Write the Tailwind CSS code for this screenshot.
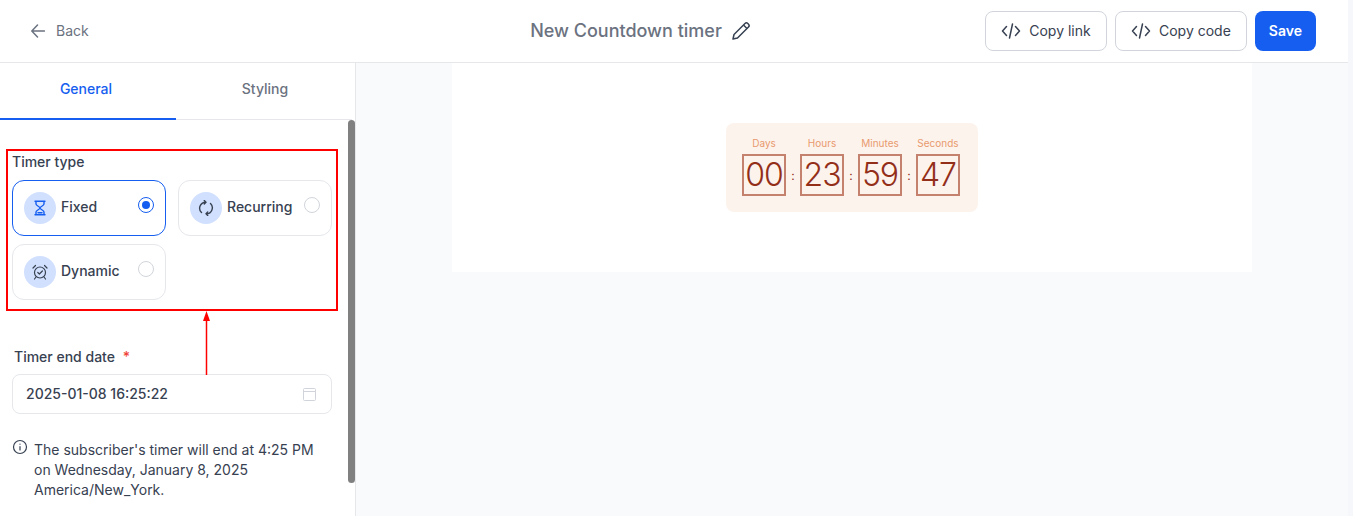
<!DOCTYPE html>
<html lang="en">
<head>
  <meta charset="UTF-8">
  <title>New Countdown timer</title>
  <script src="https://cdn.jsdelivr.net/npm/@tailwindcss/browser@4"></script>
</head>
<body class="h-[516px] w-[1353px] overflow-hidden bg-[#f5f7fa] font-['Inter',sans-serif] text-[#374151]">
  <!-- Top bar -->
  <header class="flex h-[63px] w-[1348px] items-center justify-between border-b border-[#e5e7eb] bg-white pl-[31px] pr-[32px]">
    <a class="flex w-[265px] items-center gap-[11px] text-sm text-[#6b7280]">
      <svg class="h-[14px] w-[14px]" viewBox="0 0 14 14" fill="none" stroke="currentColor" stroke-width="1.500" stroke-linecap="round" stroke-linejoin="round"><path d="M13.500 7H1M6.500 1 .8 7l5.700 6"/></svg>
      Back
    </a>
    <div class="flex items-center gap-[9px] text-lg font-medium text-[#6b7280]">
      New Countdown timer
      <svg class="h-5 w-5 text-[#374151]" viewBox="0 0 20 20" fill="none" stroke="currentColor" stroke-width="1.500" stroke-linejoin="round"><path d="M2 18l1-4.500L14 2.500a2 2 0 0 1 2.800 0l.7.7a2 2 0 0 1 0 2.800L6.500 17z"/><path d="M12.500 4l3.500 3.500"/></svg>
    </div>
    <div class="flex items-center gap-2">
      <button class="flex h-10 w-[122px] items-center justify-center gap-2 rounded-lg border border-[#d1d5db] bg-white text-sm text-[#374151]">
        <svg class="h-5 w-5" viewBox="0 0 20 20" fill="none" stroke="currentColor" stroke-width="1.500" stroke-linecap="round" stroke-linejoin="round"><path d="M5.500 5.500 1.500 10l4 4.500M14.500 5.500l4 4.500-4 4.500M11.500 3l-3 14"/></svg>
        Copy link
      </button>
      <button class="flex h-10 items-center gap-2 rounded-lg border border-[#d1d5db] bg-white px-[15px] text-sm text-[#374151]">
        <svg class="h-5 w-5" viewBox="0 0 20 20" fill="none" stroke="currentColor" stroke-width="1.500" stroke-linecap="round" stroke-linejoin="round"><path d="M5.500 5.500 1.500 10l4 4.500M14.500 5.500l4 4.500-4 4.500M11.500 3l-3 14"/></svg>
        Copy code
      </button>
      <button class="h-10 rounded-lg bg-[#155eef] px-[14px] text-sm font-semibold text-white">Save</button>
    </div>
  </header>

  <div class="flex h-[453px] w-[1348px] bg-[#f9fafb]">
    <!-- Left settings panel -->
    <aside class="relative h-full w-[356px] shrink-0 overflow-hidden border-r border-[#e5e7eb] bg-white">
      <div class="flex h-[57px] w-[352px] border-b border-[#e5e7eb] text-sm font-medium">
        <div class="flex h-[57px] w-[176px] items-center justify-center border-b-2 border-[#155eef] pb-[3px] pr-[4px] text-[#155eef]">General</div>
        <div class="flex h-[56px] w-[176px] items-center justify-center pb-[4px] pl-[2px] text-[#6b7280]">Styling</div>
      </div>

      <div class="pl-3 pr-6">
        <!-- Timer type -->
        <div class="pt-[32px] text-sm font-medium leading-5">Timer type</div>
        <div class="mt-2 grid grid-cols-[154px_154px] gap-x-3 gap-y-2">
          <label class="flex h-[56px] items-center rounded-xl border border-[#155eef] pl-[11px]">
            <span class="flex h-8 w-8 items-center justify-center rounded-full bg-[#d1e0ff] text-[#155eef]">
              <svg class="h-4 w-4" viewBox="0 0 16 16" fill="none" stroke="currentColor" stroke-width="1.400" stroke-linejoin="round" stroke-linecap="round"><path d="M3 1.200h10M3 14.800h10M4 1.200v2.800c0 1.700 4 2.700 4 4s-4 2.300-4 4v2.800M12 1.200v2.800c0 1.700-4 2.700-4 4s4 2.300 4 4v2.800M6 12.800h4"/></svg>
            </span>
            <span class="mb-[2px] ml-[5px] text-sm font-medium">Fixed</span>
            <span class="mb-[6px] ml-auto mr-[11px] flex h-4 w-4 items-center justify-center rounded-full border border-[#155eef]"><span class="h-2 w-2 rounded-full bg-[#155eef]"></span></span>
          </label>
          <label class="flex h-[56px] items-center rounded-xl border border-[#e5e7eb] pl-[11px]">
            <span class="flex h-8 w-8 items-center justify-center rounded-full bg-[#d1e0ff]">
              <svg class="h-4 w-4" viewBox="0 0 16 16" fill="none" stroke="currentColor" stroke-width="1.400" stroke-linecap="round" stroke-linejoin="round"><path d="M3.500 12.500A6 6 0 0 1 7.500 2.200M12.500 3.500a6 6 0 0 1-4 10.300M6.300.6l1.700 1.600-1.700 1.700M9.700 12.100 8 13.800l1.700 1.600"/></svg>
            </span>
            <span class="mb-[2px] ml-[5px] text-sm font-medium">Recurring</span>
            <span class="mb-[6px] ml-auto mr-[11px] h-4 w-4 rounded-full border border-[#d1d5db]"></span>
          </label>
          <label class="flex h-[56px] items-center rounded-xl border border-[#e5e7eb] pl-[11px]">
            <span class="flex h-8 w-8 items-center justify-center rounded-full bg-[#d1e0ff]">
              <svg class="h-4 w-4" viewBox="0 0 16 16" fill="none" stroke="currentColor" stroke-width="1.200" stroke-linecap="round" stroke-linejoin="round"><circle cx="8" cy="8.500" r="5.500"/><path d="M5.800 8.500 7.400 10l3-3M1 4 3.500 1.500M15 4l-2.500-2.500M4 13l-1.500 2M12 13l1.500 2"/></svg>
            </span>
            <span class="mb-[2px] ml-[5px] text-sm font-medium">Dynamic</span>
            <span class="mb-[6px] ml-auto mr-[11px] h-4 w-4 rounded-full border border-[#d1d5db]"></span>
          </label>
        </div>

        <!-- Timer end date -->
        <div class="mt-[47px] pl-[2px] text-sm font-medium leading-5">Timer end date <span class="ml-1 text-[#f04438]">*</span></div>
        <div class="mt-[7px] flex h-10 w-[320px] items-center justify-between rounded-lg border border-[#e5e7eb] pl-[13px] pr-[15px] text-sm font-medium">
          2025-01-08 16:25:22
          <svg class="h-[13px] w-[13px] text-[#d1d5db]" viewBox="0 0 13 13" fill="none" stroke="currentColor" stroke-width="1"><rect x=".5" y=".5" width="12" height="12" rx="1"/><path d="M.5 3.500h12"/></svg>
        </div>
        <div class="mt-[26px] flex w-[320px] gap-[6px] text-sm leading-[20px]">
          <svg class="-mt-px h-4 w-4 shrink-0" viewBox="0 0 16 16" fill="none" stroke="currentColor" stroke-width="1.200" stroke-linecap="round"><circle cx="8" cy="8" r="6.500"/><path d="M8 7.500v3.500M8 5v.2"/></svg>
          <p>The subscriber's timer will end at 4:25 PM<br>on Wednesday, January 8, 2025<br>America/New_York.</p>
        </div>
      </div>

      <!-- Scrollbar thumb -->
      <div class="absolute left-[348px] top-[57px] h-[363px] w-[7px] rounded-full bg-[#808080]"></div>

      <!-- Annotation: red box and arrow -->
      <div class="absolute left-[6px] top-[86px] h-[162px] w-[332px] border-2 border-[#ff0000]"></div>
      <svg class="absolute left-[199px] top-[248px] h-[64px] w-[15px]" viewBox="0 0 15 64"><path d="M7.500 10v54" stroke="#ff0000" stroke-width="1.500"/><path d="M7.500 0l3.500 10h-7z" fill="#ff0000"/></svg>
    </aside>

    <!-- Preview -->
    <main class="flex-1">
      <div class="ml-[96px] flex h-[209px] w-[800px] justify-center bg-white pt-[60px]">
        <div class="h-[89px] w-[252px] rounded-lg bg-[#fdf3ed] pl-4 pr-[18px] pt-[13px]">
          <div class="flex items-start justify-between">
            <div class="flex w-[44px] flex-col items-center">
              <span class="text-[10px] leading-[14px] text-[#e89a6e]">Days</span>
              <span class="mt-[4px] flex h-[42px] w-[44px] items-center justify-center border-2 border-[#c4816e] text-[32px] font-[350] tracking-[-1px] text-[#932f19]">00</span>
            </div>
            <span class="mt-[32px] text-xs leading-4 text-[#932f19]">:</span>
            <div class="flex w-[44px] flex-col items-center">
              <span class="text-[10px] leading-[14px] text-[#e89a6e]">Hours</span>
              <span class="mt-[4px] flex h-[42px] w-[44px] items-center justify-center border-2 border-[#c4816e] text-[32px] font-[350] tracking-[-1px] text-[#932f19]">23</span>
            </div>
            <span class="mt-[32px] text-xs leading-4 text-[#932f19]">:</span>
            <div class="flex w-[44px] flex-col items-center">
              <span class="text-[10px] leading-[14px] text-[#e89a6e]">Minutes</span>
              <span class="mt-[4px] flex h-[42px] w-[44px] items-center justify-center border-2 border-[#c4816e] text-[32px] font-[350] tracking-[-1px] text-[#932f19]">59</span>
            </div>
            <span class="mt-[32px] text-xs leading-4 text-[#932f19]">:</span>
            <div class="flex w-[44px] flex-col items-center">
              <span class="text-[10px] leading-[14px] text-[#e89a6e]">Seconds</span>
              <span class="mt-[4px] flex h-[42px] w-[44px] items-center justify-center border-2 border-[#c4816e] text-[32px] font-[350] tracking-[-1px] text-[#932f19]">47</span>
            </div>
          </div>
        </div>
      </div>
    </main>
  </div>
</body>
</html>
